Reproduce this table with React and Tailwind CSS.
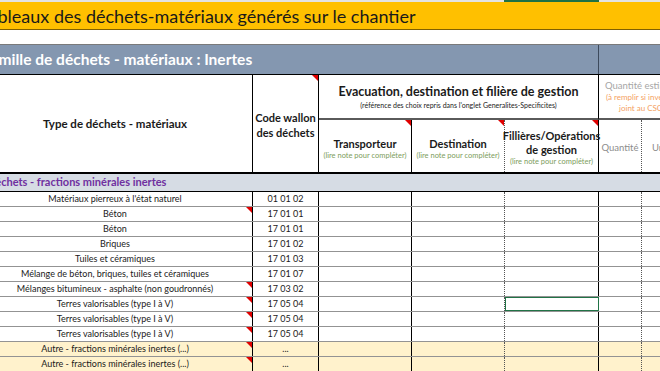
import React from "react";

const ROWS = [
  { label: "Matériaux pierreux à l'état naturel", code: "01 01 02", note: false },
  { label: "Béton", code: "17 01 01", note: true },
  { label: "Béton", code: "17 01 01", note: false },
  { label: "Briques", code: "17 01 02", note: false },
  { label: "Tuiles et céramiques", code: "17 01 03", note: false },
  { label: "Mélange de béton, briques, tuiles et céramiques", code: "17 01 07", note: false },
  { label: "Mélanges bitumineux - asphalte (non goudronnés)", code: "17 03 02", note: true },
  { label: "Terres valorisables (type I à V)", code: "17 05 04", note: true, selected: true },
  { label: "Terres valorisables (type I à V)", code: "17 05 04", note: true },
  { label: "Terres valorisables (type I à V)", code: "17 05 04", note: true },
  { label: "Autre - fractions minérales inertes (...)", code: "...", note: true, other: true },
  { label: "Autre - fractions minérales inertes (...)", code: "...", note: true, other: true },
];

const COLS = "grid-cols-[275px_66px_93px_93px_94px_43px_100px]";

function Note() {
  return (
    <span className="absolute top-0 right-0 w-0 h-0 border-t-[6px] border-l-[6px] border-t-[#e00000] border-l-transparent" />
  );
}

function Hint() {
  return <div className="text-[7.5px] leading-[10px] text-[#7d9d5c] font-normal whitespace-nowrap">(lire note pour compléter)</div>;
}

export default function App() {
  return (
    <div className="w-[660px] h-[371px] overflow-hidden bg-white text-[#1a1a1a]" style={{ fontFamily: "Lato, 'Open Sans', sans-serif" }}>
      {/* column header strip */}
      <div className="flex h-[2px] bg-[#e3e3e3]">
        <div className="w-[504px]" />
        <div className="w-[95px] bg-[#1e7145]" />
      </div>

      <div className="ml-[-22px] w-[764px]">
        {/* TITLE */}
        <div className="h-[28px] bg-[#ffc000] border-b border-[#806000] flex items-center pl-[2px]">
          <span className="text-[18px] leading-none whitespace-nowrap">Tableaux des déchets-matériaux générés sur le chantier</span>
        </div>

        <div className="h-[15px] border-b border-[#7a7a7a]" />

        {/* FAMILY */}
        <div className={`grid ${COLS} h-[30px] bg-[#8497b0] border-b border-black`}>
          <div className="col-span-5 border-r border-[#3d4a5c] flex items-center pl-[5px]">
            <span className="text-[15.5px] font-bold text-white whitespace-nowrap">Famille de déchets - matériaux : Inertes</span>
          </div>
          <div className="col-span-2" />
        </div>

        {/* HEADER */}
        <div className={`grid ${COLS} grid-rows-[45px_52px] border-b-2 border-black`}>
          <div className="row-span-2 border-r border-black flex items-center justify-center text-[11.5px] font-bold">
            Type de déchets - matériaux
          </div>
          <div className="relative row-span-2 border-r border-black flex items-center justify-center text-center text-[11px] font-bold leading-[15px] pt-[3px]">
            <span>Code wallon<br />des déchets</span>
            <Note />
          </div>
          <div className="col-span-3 border-r border-black border-b-2 border-b-[#5a5a5a] flex flex-col items-center justify-center">
            <div className="text-[12.5px] font-bold leading-[16px]">Evacuation, destination et filière de gestion</div>
            <div className="text-[7px] leading-[10px]">(référence des choix repris dans l'onglet Generalites-Specificites)</div>
          </div>
          <div className="col-span-2 border-b-2 border-b-[#5a5a5a] flex flex-col justify-center whitespace-nowrap text-[8px] leading-[11px]">
            <div className="pl-[6px] text-[9.5px] leading-[12px] text-[#a6a6a6]">Quantité estimée</div>
            <div className="pl-[7px] text-[#f4a15f]">(à remplir si inventaire</div>
            <div className="pl-[20px] text-[#f4a15f]">joint au CSChantier)</div>
          </div>

          <div className="relative border-r border-black flex flex-col items-center justify-center pt-[6px]">
            <div className="text-[11px] font-bold leading-[14px]">Transporteur</div>
            <Hint />
            <Note />
          </div>
          <div className="relative border-r border-dotted border-r-[#555] flex flex-col items-center justify-center pt-[6px]">
            <div className="text-[11px] font-bold leading-[14px]">Destination</div>
            <Hint />
            <Note />
          </div>
          <div className="relative border-r border-black flex flex-col items-center justify-center text-center pt-[4px]">
            <div className="text-[11px] font-bold leading-[14px]">Fillières/Opérations<br />de gestion</div>
            <Hint />
            <Note />
          </div>
          <div className="border-r border-dotted border-r-[#555] flex items-center justify-center text-[9.5px] text-[#8c8c8c] pt-[4px]">
            Quantité
          </div>
          <div className="flex items-center pl-[10px] text-[9.5px] text-[#8c8c8c] pt-[4px]">Unité</div>
        </div>

        {/* SECTION */}
        <div className="h-[18px] bg-[#d6dce4] border-b border-black flex items-center pl-[9px]">
          <span className="text-[11px] font-bold text-[#7030a0] whitespace-nowrap">Déchets - fractions minérales inertes</span>
        </div>

        {/* DATA ROWS */}
        {ROWS.map((r, i) => (
          <div
            key={i}
            className={`grid ${COLS} h-[15px] border-b border-[#939393] text-[9px] ${r.other ? "bg-[#fff2cc]" : "bg-white"}`}
          >
            <div className="relative border-r border-black flex items-center justify-center whitespace-nowrap">
              {r.label}
              {r.note && <Note />}
            </div>
            <div className="border-r border-black flex items-center justify-center">{r.code}</div>
            <div className="border-r border-black" />
            <div className="border-r border-dotted border-r-[#555]" />
            <div className={`border-r border-black ${r.selected ? "outline outline-[1.5px] outline-[#217346] -outline-offset-1" : ""}`} />
            <div className="border-r border-dotted border-r-[#555]" />
            <div />
          </div>
        ))}
        <div className={`grid ${COLS} h-[15px]`}>
          <div className="border-r border-black" />
          <div className="border-r border-black" />
          <div className="border-r border-black" />
          <div className="border-r border-dotted border-r-[#555]" />
          <div className="border-r border-black" />
          <div className="border-r border-dotted border-r-[#555]" />
          <div />
        </div>
      </div>
    </div>
  );
}
